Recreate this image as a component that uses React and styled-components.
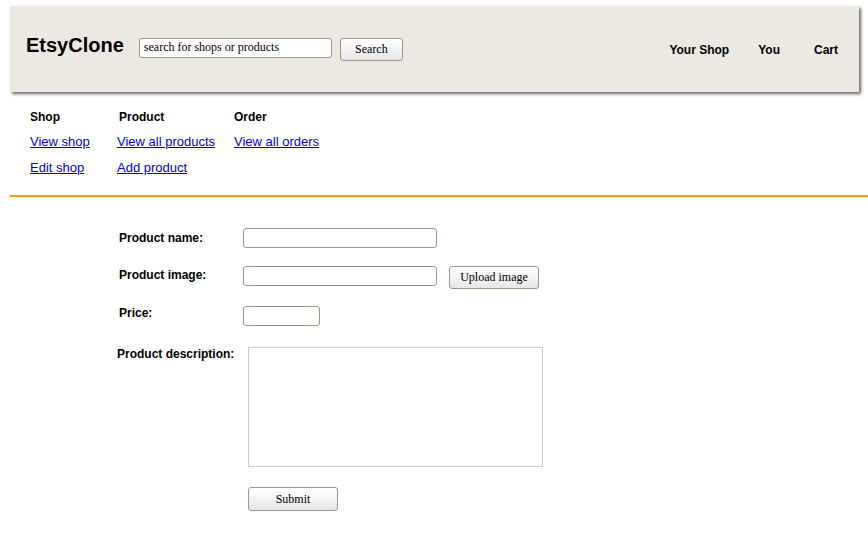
import React from "react";
import styled, { createGlobalStyle } from "styled-components";

const Global = createGlobalStyle`
  html, body { margin: 0; padding: 0; background: #fff; }
  body { font-family: "Liberation Sans", Arial, sans-serif; color: #000; }
`;

const Page = styled.div`
  padding: 6px 0 0 10px;
`;

const Header = styled.header`
  display: flex;
  align-items: center;
  height: 86px;
  margin-right: 9px;
  padding: 0 21px 0 16px;
  box-sizing: border-box;
  background: #ece9e3;
  box-shadow: 2px 2px 3px rgba(0, 0, 0, 0.6);
`;

const Logo = styled.div`
  font-size: 20px;
  font-weight: bold;
  line-height: 23px;
  margin-bottom: 8px;
  margin-right: 15px;
`;

const SearchForm = styled.form`
  display: flex;
  align-items: flex-start;
  gap: 8px;
  margin: 0;
`;

const TextInput = styled.input`
  box-sizing: border-box;
  width: ${(p) => p.$w || 194}px;
  height: 20px;
  border: 1px solid #a39686;
  border-radius: 3px;
  background: #fff;
  padding: 0 4px;
  font-family: "Liberation Serif", "Times New Roman", serif;
  font-size: 12px;
  color: #000;
  outline: none;
`;

const Button = styled.button`
  box-sizing: border-box;
  width: ${(p) => p.$w}px;
  height: ${(p) => p.$h || 23}px;
  border: 1px solid #a39686;
  border-radius: 3px;
  background: linear-gradient(#ffffff, #f3f3f3 50%, #e6e6e6);
  font-family: "Liberation Serif", "Times New Roman", serif;
  font-size: 12px;
  color: #000;
  padding: 0;
  cursor: pointer;
`;

const Spacer = styled.div`
  flex: 1;
`;

const NavItem = styled.a`
  font-size: 12px;
  font-weight: bold;
  color: #000;
  text-decoration: none;
  margin-top: 2px;
  margin-left: ${(p) => p.$ml || 0}px;
`;

const SubNav = styled.nav`
  display: grid;
  grid-template-columns: 87px 117px auto;
  padding: 18px 0 0 20px;
`;

const Column = styled.div`
  display: flex;
  flex-direction: column;
`;

const ColumnTitle = styled.div`
  font-size: 12px;
  font-weight: bold;
  line-height: 14px;
  margin-bottom: 5px;
  padding-left: ${(p) => p.$indent || 0}px;
`;

const SubLink = styled.a`
  font-size: 13px;
  line-height: 26px;
  color: #0000ee;
  text-decoration: underline;
  width: max-content;
`;

const Divider = styled.hr`
  border: 0;
  height: 2px;
  background: #ff9900;
  margin: 14px 0 0 0;
`;

const Form = styled.form`
  margin: 31px 0 0 109px;
  display: flex;
  flex-direction: column;
`;

const FormRow = styled.div`
  display: grid;
  grid-template-columns: ${(p) => p.$labelCol || 124}px auto;
  align-items: start;
  margin-top: ${(p) => p.$mt || 0}px;
  margin-bottom: ${(p) => p.$mb ?? 18}px;
  margin-left: ${(p) => p.$ml || 0}px;
`;

const Label = styled.label`
  font-size: 12px;
  font-weight: bold;
  line-height: 14px;
  padding-top: ${(p) => p.$pt ?? 2}px;
`;

const Field = styled.div`
  display: flex;
  align-items: flex-start;
  gap: 12px;
`;

const TextArea = styled.textarea`
  box-sizing: border-box;
  width: 295px;
  height: 120px;
  border: 1px solid #cccccc;
  border-radius: 0;
  resize: none;
  outline: none;
  padding: 2px;
`;

export default function App() {
  return (
    <>
      <Global />
      <Page>
        <Header>
          <Logo>EtsyClone</Logo>
          <SearchForm onSubmit={(e) => e.preventDefault()}>
            <TextInput $w={193} defaultValue="search for shops or products" />
            <Button type="submit" $w={63}>Search</Button>
          </SearchForm>
          <Spacer />
          <NavItem href="#">Your Shop</NavItem>
          <NavItem href="#" $ml={29}>You</NavItem>
          <NavItem href="#" $ml={34}>Cart</NavItem>
        </Header>

        <SubNav>
          <Column>
            <ColumnTitle>Shop</ColumnTitle>
            <SubLink href="#">View shop</SubLink>
            <SubLink href="#">Edit shop</SubLink>
          </Column>
          <Column>
            <ColumnTitle $indent={2}>Product</ColumnTitle>
            <SubLink href="#">View all products</SubLink>
            <SubLink href="#">Add product</SubLink>
          </Column>
          <Column>
            <ColumnTitle>Order</ColumnTitle>
            <SubLink href="#">View all orders</SubLink>
          </Column>
        </SubNav>

        <Divider />

        <Form onSubmit={(e) => e.preventDefault()}>
          <FormRow>
            <Label $pt={3}>Product name:</Label>
            <Field>
              <TextInput $w={194} />
            </Field>
          </FormRow>
          <FormRow $mb={17}>
            <Label $pt={2}>Product image:</Label>
            <Field>
              <TextInput $w={194} />
              <Button type="button" $w={90}>Upload image</Button>
            </Field>
          </FormRow>
          <FormRow>
            <Label $pt={0}>Price:</Label>
            <Field>
              <TextInput $w={77} />
            </Field>
          </FormRow>
          <FormRow $labelCol={131} $ml={-2} $mt={3} $mb={20}>
            <Label $pt={0}>Product description:</Label>
            <Field>
              <TextArea />
            </Field>
          </FormRow>
          <FormRow $labelCol={131} $ml={-2}>
            <span />
            <Field>
              <Button type="submit" $w={90} $h={24}>Submit</Button>
            </Field>
          </FormRow>
        </Form>
      </Page>
    </>
  );
}
